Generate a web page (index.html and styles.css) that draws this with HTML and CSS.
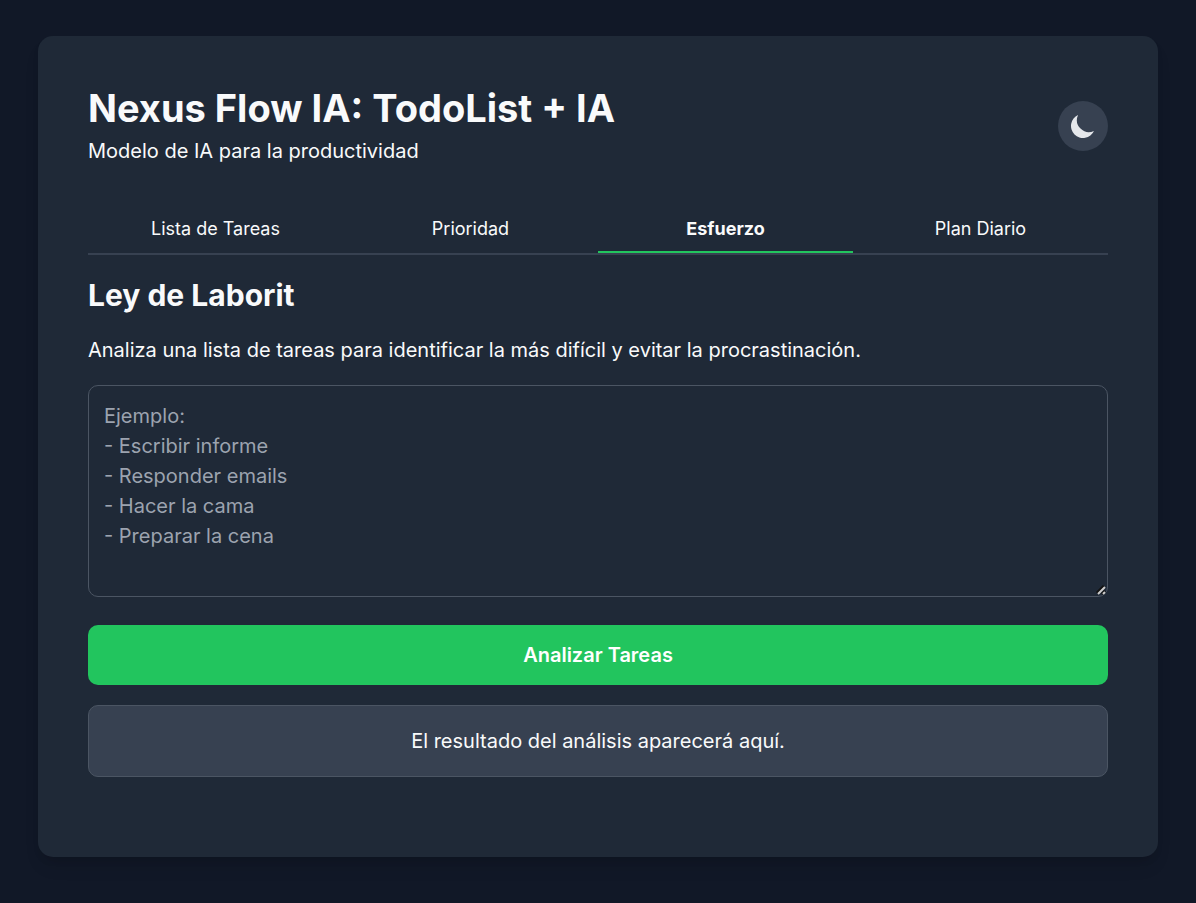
FILE: index.html
```html
<!DOCTYPE html>
<html lang="es">
<head>
<meta charset="UTF-8">
<meta name="viewport" content="width=device-width, initial-scale=1">
<title>Nexus Flow IA</title>
<link rel="stylesheet" href="styles.css">
</head>
<body>
<main class="card">
  <header class="header">
    <div>
      <h1 class="title">Nexus Flow IA: TodoList + IA</h1>
      <p class="subtitle">Modelo de IA para la productividad</p>
    </div>
    <button class="theme-toggle" type="button" aria-label="Cambiar tema">
      <svg class="moon" viewBox="0 0 20 20" fill="currentColor" aria-hidden="true"><path d="M17.293 13.293A8 8 0 016.707 2.707a8.001 8.001 0 1010.586 10.586z"/></svg>
    </button>
  </header>
  <nav class="tabs">
    <button class="tab" type="button">Lista de Tareas</button>
    <button class="tab" type="button">Prioridad</button>
    <button class="tab tab-active" type="button">Esfuerzo</button>
    <button class="tab" type="button">Plan Diario</button>
  </nav>
  <section class="panel">
    <h2 class="heading">Ley de Laborit</h2>
    <label class="description" for="tasks">Analiza una lista de tareas para identificar la más difícil y evitar la procrastinación.</label>
    <textarea class="tasks" id="tasks" rows="6" placeholder="Ejemplo:
- Escribir informe
- Responder emails
- Hacer la cama
- Preparar la cena"></textarea>
    <button class="analyze" type="button">Analizar Tareas</button>
    <div class="result">El resultado del análisis aparecerá aquí.</div>
  </section>
</main>
</body>
</html>
```
FILE: styles.css
```css
* {
  box-sizing: border-box;
  margin: 0;
}

body {
  min-height: 100vh;
  padding: 36px 38px 46px;
  display: flex;
  justify-content: center;
  background: #111827;
  color: #f9fafb;
  font: 20px/30px Inter, sans-serif;
}

button,
textarea {
  font: inherit;
  color: inherit;
}

button {
  border: 0;
  cursor: pointer;
}

.card {
  width: 100%;
  max-width: 1120px;
  padding: 50px;
  border-radius: 15px;
  background: #1f2937;
  box-shadow: 0 12px 18px -4px rgb(0 0 0 / 10%), 0 5px 8px -3px rgb(0 0 0 / 10%);
}

.header {
  display: flex;
  justify-content: space-between;
  align-items: center;
  margin-bottom: 40px;
}

.title {
  font-size: 38px;
  line-height: 45px;
  font-weight: 700;
  margin-bottom: 5px;
}

.theme-toggle {
  display: flex;
  padding: 10px;
  border-radius: 50%;
  background: #374151;
  color: #e5e7eb;
}

.moon {
  width: 30px;
  height: 30px;
}

.tabs {
  display: flex;
  margin-bottom: 20px;
  border-bottom: 2px solid #374151;
}

.tab {
  flex: 1;
  padding: 10px;
  border-bottom: 2px solid transparent;
  background: none;
  font-size: 18px;
  line-height: 25px;
}

.tab-active {
  border-color: #22c55e;
  font-weight: 700;
}

.panel {
  display: flex;
  flex-direction: column;
}

.heading {
  margin-bottom: 20px;
  font-size: 30px;
  line-height: 40px;
}

.description {
  margin-bottom: 20px;
}

.tasks {
  width: 100%;
  margin-bottom: 28px;
  padding: 15px;
  border: 1px solid #4b5563;
  border-radius: 10px;
  background: transparent;
  resize: vertical;
}

.tasks::placeholder {
  color: #9ca3af;
}

.tasks::-webkit-resizer {
  background: url("data:image/svg+xml,%3Csvg xmlns='http://www.w3.org/2000/svg' width='15' height='15'%3E%3Cpath d='M5 12L12 5M10 13L13 10' stroke='%23111' stroke-width='3'/%3E%3Cpath d='M6 13L13 6M11 13L13 11' stroke='%23ccc' stroke-width='2'/%3E%3C/svg%3E") no-repeat right bottom;
}

.analyze {
  margin-bottom: 20px;
  padding: 15px;
  border-radius: 10px;
  background: #22c55e;
  color: #fff;
  font-weight: 600;
}

.result {
  padding: 20px;
  border: 1px solid #4b5563;
  border-radius: 10px;
  background: #374151;
  text-align: center;
}
```
